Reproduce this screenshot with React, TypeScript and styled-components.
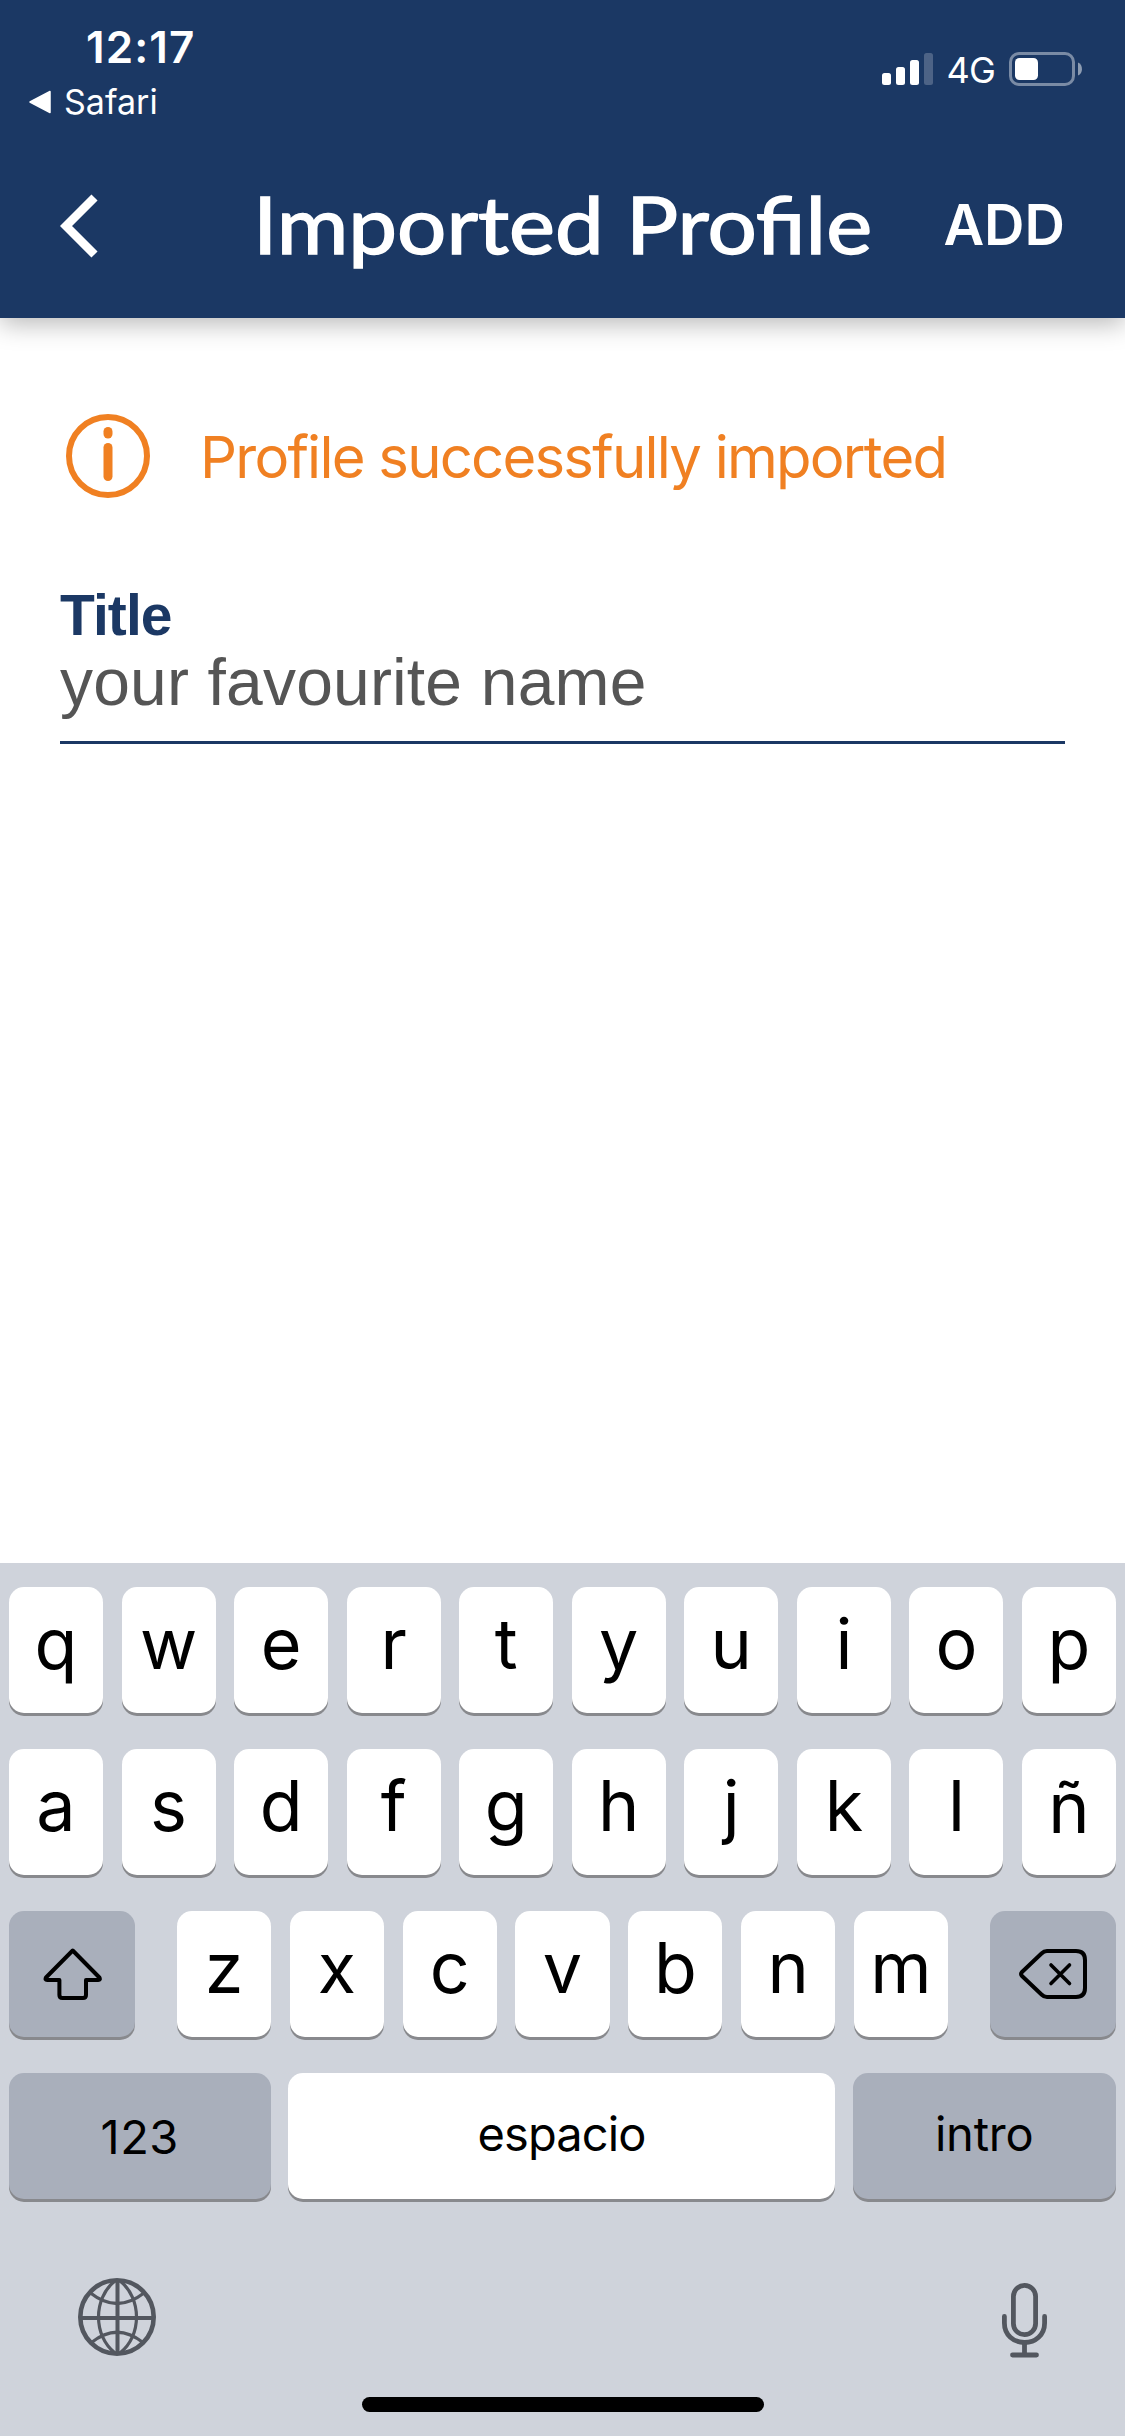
import React from "react";
import styled, { createGlobalStyle } from "styled-components";

const navy = "#1b3864";
const orange = "#f08022";
const ui = `Inter, Roboto, "Liberation Sans", sans-serif`;
const helvetica = `"Liberation Sans", Arial, sans-serif`;

const GlobalStyle = createGlobalStyle`
  *, *::before, *::after { box-sizing: border-box; }
  body { margin: 0; background: #fff; font-family: ${ui}; }
  button { font: inherit; border: 0; margin: 0; padding: 0; background: none; color: inherit; }
  svg { display: block; flex: none; }
`;

const Screen = styled.div`
  width: 1125px;
  height: 2436px;
  display: flex;
  flex-direction: column;
  background: #fff;
  overflow: hidden;
`;

const Header = styled.header`
  height: 318px;
  flex: none;
  background: ${navy};
  color: #fff;
  box-shadow: 0 6px 24px rgba(0, 0, 0, 0.28);
`;

const StatusBar = styled.div`
  height: 132px;
  display: flex;
  justify-content: space-between;
  padding: 23px 42px 0 29px;
`;

const StatusLeft = styled.div`
  display: flex;
  flex-direction: column;
  gap: 11px;
`;

const Clock = styled.div`
  padding-left: 57px;
  font-size: 44px;
  line-height: 48px;
  font-weight: 600;
  letter-spacing: 1.1px;
`;

const BackToApp = styled.div`
  display: flex;
  align-items: center;
  gap: 12px;
  font-size: 34px;
  line-height: 40px;
`;

const StatusRight = styled.div`
  display: flex;
  align-items: center;
  height: 34px;
  margin-top: 29px;
`;

const Network = styled.span`
  margin: 2px 14px 0 12px;
  font-size: 36px;
  line-height: 34px;
  letter-spacing: -0.8px;
`;

const NavBar = styled.div`
  height: 186px;
  display: grid;
  grid-template-columns: 180px 1fr 180px;
  align-items: center;
  padding: 0 60px;
`;

const BackButton = styled.button`
  justify-self: start;
  padding-top: 2px;
`;

/* Stretched horizontally for the wide geometric look of the title face. */
const PageTitle = styled.h1`
  justify-self: center;
  margin: 0 0 4px;
  font-family: Lato, ${ui};
  font-weight: 400;
  font-size: 80px;
  line-height: 100px;
  white-space: nowrap;
  transform: scaleX(1.088);
  -webkit-text-stroke: 1.5px #fff;
`;

const AddButton = styled.button`
  justify-self: end;
  font-size: 56px;
  line-height: 60px;
  font-weight: 600;
`;

const Content = styled.main`
  flex: 1;
  padding: 96px 60px 0;
`;

const Notice = styled.div`
  display: flex;
  align-items: center;
  gap: 50px;
  height: 84px;
  padding-left: 6px;
  color: ${orange};
  font-size: 58px;
  letter-spacing: -1.76px;
  white-space: nowrap;
`;

const NoticeText = styled.span`
  line-height: 60px;
  padding-top: 2px;
`;

const Field = styled.label`
  display: block;
  margin-top: 87px;
  font-family: ${helvetica};
`;

const FieldLabel = styled.span`
  display: block;
  color: ${navy};
  font-size: 57px;
  line-height: 60px;
  font-weight: 700;
  letter-spacing: -0.9px;
`;

const FieldInput = styled.input`
  display: block;
  width: 100%;
  height: 98px;
  margin-top: 1px;
  padding: 0 0 23px;
  border: 0;
  border-bottom: 3px solid ${navy};
  border-radius: 0;
  outline: 0;
  background: none;
  color: #555;
  font: 66px/72px ${helvetica};
  letter-spacing: 0.17px;
`;

const Keyboard = styled.section`
  flex: none;
  height: 873px;
  padding: 24px 9px 0;
  background: #cfd3db;
`;

const Rows = styled.div`
  display: flex;
  flex-direction: column;
  gap: 36px;
`;

const KeyRow = styled.div<{ $columns: string; $gap?: string }>`
  display: grid;
  grid-template-columns: ${(p) => p.$columns};
  column-gap: ${(p) => p.$gap ?? "18.5px"};
  height: 126px;
`;

const Key = styled.button<{ $dark?: boolean; $size?: number; $lift?: number; $tracking?: number }>`
  display: flex;
  align-items: center;
  justify-content: center;
  min-width: 0;
  height: 126px;
  padding-bottom: ${(p) => p.$lift ?? 0}px;
  padding-top: ${(p) => Math.max(0, -(p.$lift ?? 0))}px;
  border-radius: 15px;
  background: ${(p) => (p.$dark ? "#a9afbb" : "#fff")};
  box-shadow: 0 3px 0 #88898d;
  color: #000;
  font-size: ${(p) => p.$size ?? 70}px;
  font-weight: ${(p) => (p.$size ? 400 : 370)};
  line-height: 80px;
  letter-spacing: ${(p) => p.$tracking ?? 0}px;
`;

const KeyboardTools = styled.div`
  display: flex;
  justify-content: space-between;
  align-items: flex-end;
  height: 80px;
  margin-top: 79px;
  padding: 0 69px;
`;

const HomeIndicator = styled.div`
  width: 402px;
  height: 15px;
  margin: 39px auto 0;
  border-radius: 8px;
  background: #000;
`;

const SignalIcon = () => (
  <svg width="52" height="34" viewBox="0 0 52 34" fill="#fff">
    <rect x="0" y="21" width="9" height="12" rx="2.5" />
    <rect x="14" y="15" width="9" height="18" rx="2.5" />
    <rect x="28" y="8" width="9" height="25" rx="2.5" />
    <rect x="42" y="1" width="9" height="32" rx="2.5" opacity="0.22" />
  </svg>
);

const BatteryIcon = () => (
  <svg width="74" height="34" viewBox="0 0 74 34">
    <rect x="1.5" y="1.5" width="63" height="31" rx="8.5" fill="none" stroke="#fff" strokeOpacity="0.42" strokeWidth="3" />
    <rect x="6" y="6" width="23" height="22" rx="4.5" fill="#fff" />
    <path d="M69 10.5c5.3 2 5.3 11 0 13z" fill="#fff" fillOpacity="0.5" />
  </svg>
);

const BackTriangle = () => (
  <svg width="23" height="24" viewBox="0 0 23 24">
    <path d="M1 12 21 1.5V22.5z" fill="#fff" stroke="#fff" strokeWidth="1.5" strokeLinejoin="round" />
  </svg>
);

const ChevronIcon = () => (
  <svg width="40" height="64" viewBox="0 0 40 64">
    <path d="M34.5 3.5 6 32 34.5 60.5" fill="none" stroke="#fff" strokeWidth="8.6" />
  </svg>
);

const InfoIcon = () => (
  <svg width="84" height="84" viewBox="0 0 84 84">
    <circle cx="42" cy="42" r="39" fill="none" stroke={orange} strokeWidth="6" />
    <rect x="37.5" y="13" width="9" height="11.5" rx="4.5" fill={orange} />
    <rect x="37.5" y="29" width="9" height="38" rx="4.5" fill={orange} />
  </svg>
);

const ShiftIcon = () => (
  <svg width="60" height="54" viewBox="-0.7 0 60 54" fill="none" stroke="#000" strokeWidth="4" strokeLinejoin="round">
    <path d="M30 3.5 3.3 30.5Q2 33 4.5 33H16.7V48Q16.7 51 19.7 51H40.3Q43.3 51 43.3 48V33H55.5Q58 33 56.7 30.5Z" />
  </svg>
);

const DeleteIcon = () => (
  <svg width="70" height="52" viewBox="0 0 70 52" fill="none" stroke="#000" strokeWidth="4" strokeLinejoin="round" strokeLinecap="round">
    <path d="M29 3H58Q67 3 67 12V40Q67 49 58 49H29Q26 49 23.5 46.5L4 28Q2 26 4 24L23.5 5.5Q26 3 29 3Z" />
    <path d="M33 17 51.5 35.5M51.5 17 33 35.5" strokeWidth="3.6" />
  </svg>
);

const GlobeIcon = () => (
  <svg width="78" height="80" viewBox="0 0 78 80" fill="none" stroke="#53575f" strokeWidth="3.2">
    <circle cx="39" cy="39" r="36.7" strokeWidth="4.6" />
    <path d="M39.5 2V76M2 40H76" strokeWidth="4" />
    <path d="M37 3C15 20 15 58 37 75M42 3C64 20 64 58 42 75" />
    <path d="M12.5 15Q39 36 66 15M13.5 64.5Q39 44 65 64.5" />
  </svg>
);

const MicIcon = () => (
  <svg width="46" height="76" viewBox="-0.5 0 46 76" fill="none" stroke="#53575f" strokeWidth="4.8" strokeLinecap="round">
    <rect x="11.9" y="3.4" width="22.2" height="49.2" rx="11.1" />
    <path d="M2.9 34.5V41C2.9 53 12 60.5 23 60.5S43.1 53 43.1 41V34.5M23 60.5V73M11 73H35" />
  </svg>
);

const topRow = ["q", "w", "e", "r", "t", "y", "u", "i", "o", "p"];
const homeRow = ["a", "s", "d", "f", "g", "h", "j", "k", "l", "ñ"];
const bottomRow = ["z", "x", "c", "v", "b", "n", "m"];

const LetterRow = ({ letters, gap }: { letters: string[]; gap?: string }) => (
  <KeyRow $columns={`repeat(${letters.length}, 1fr)`} $gap={gap}>
    {letters.map((letter) => (
      <Key key={letter} $lift={letter === "ñ" ? 9 : 13}>
        {letter}
      </Key>
    ))}
  </KeyRow>
);

export default function App() {
  return (
    <Screen>
      <GlobalStyle />
      <Header>
        <StatusBar>
          <StatusLeft>
            <Clock>12:17</Clock>
            <BackToApp>
              <BackTriangle />
              Safari
            </BackToApp>
          </StatusLeft>
          <StatusRight>
            <SignalIcon />
            <Network>4G</Network>
            <BatteryIcon />
          </StatusRight>
        </StatusBar>
        <NavBar>
          <BackButton aria-label="Back">
            <ChevronIcon />
          </BackButton>
          <PageTitle>Imported Profile</PageTitle>
          <AddButton>ADD</AddButton>
        </NavBar>
      </Header>
      <Content>
        <Notice>
          <InfoIcon />
          <NoticeText>Profile successfully imported</NoticeText>
        </Notice>
        <Field>
          <FieldLabel>Title</FieldLabel>
          <FieldInput defaultValue="your favourite name" />
        </Field>
      </Content>
      <Keyboard>
        <Rows>
          <LetterRow letters={topRow} />
          <LetterRow letters={homeRow} />
          <KeyRow $columns="126px 1fr 126px" $gap="42px">
            <Key $dark aria-label="Shift">
              <ShiftIcon />
            </Key>
            <LetterRow letters={bottomRow} gap="18.8px" />
            <Key $dark aria-label="Delete">
              <DeleteIcon />
            </Key>
          </KeyRow>
          <KeyRow $columns="261.5px 547px 1fr" $gap="17.5px">
            <Key $dark $size={47} $lift={-2} $tracking={0.5}>
              123
            </Key>
            <Key $size={47} $lift={4} $tracking={-0.9}>
              espacio
            </Key>
            <Key $dark $size={47} $lift={4} $tracking={-0.2}>
              intro
            </Key>
          </KeyRow>
        </Rows>
        <KeyboardTools>
          <GlobeIcon />
          <MicIcon />
        </KeyboardTools>
        <HomeIndicator />
      </Keyboard>
    </Screen>
  );
}
